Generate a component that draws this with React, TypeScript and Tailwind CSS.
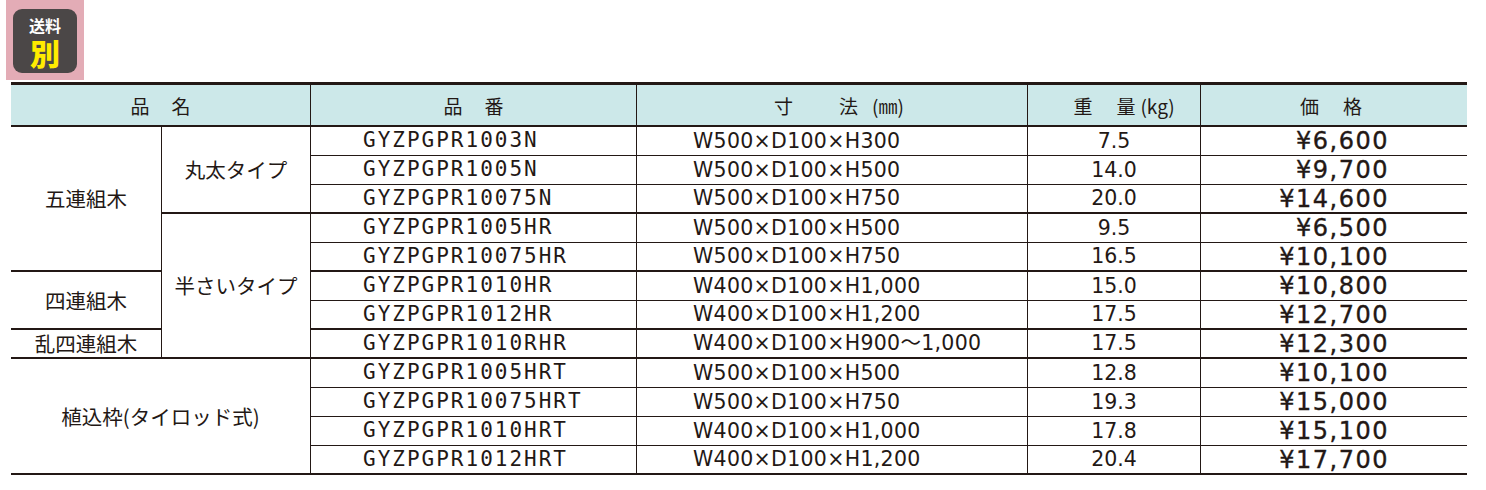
const items = [
  { pn: "GYZPGPR1003N", dim: "W500×D100×H300", wt: "7.5", price: "¥6,600" },
  { pn: "GYZPGPR1005N", dim: "W500×D100×H500", wt: "14.0", price: "¥9,700" },
  { pn: "GYZPGPR10075N", dim: "W500×D100×H750", wt: "20.0", price: "¥14,600", thick: true },
  { pn: "GYZPGPR1005HR", dim: "W500×D100×H500", wt: "9.5", price: "¥6,500" },
  { pn: "GYZPGPR10075HR", dim: "W500×D100×H750", wt: "16.5", price: "¥10,100", thick: true },
  { pn: "GYZPGPR1010HR", dim: "W400×D100×H1,000", wt: "15.0", price: "¥10,800" },
  { pn: "GYZPGPR1012HR", dim: "W400×D100×H1,200", wt: "17.5", price: "¥12,700", thick: true },
  { pn: "GYZPGPR1010RHR", dim: "W400×D100×H900〜1,000", wt: "17.5", price: "¥12,300", thick: true },
  { pn: "GYZPGPR1005HRT", dim: "W500×D100×H500", wt: "12.8", price: "¥10,100" },
  { pn: "GYZPGPR10075HRT", dim: "W500×D100×H750", wt: "19.3", price: "¥15,000" },
  { pn: "GYZPGPR1010HRT", dim: "W400×D100×H1,000", wt: "17.8", price: "¥15,100" },
  { pn: "GYZPGPR1012HRT", dim: "W400×D100×H1,200", wt: "20.4", price: "¥17,700", thick: true },
];

const cjk = "font-['Noto_Sans_CJK_JP',sans-serif]";
const num = "font-['DejaVu_Sans','Noto_Sans_CJK_JP',sans-serif]";

function Badge() {
  return (
    <div className="ml-[6px] h-[80px] w-[78px] bg-[#e3acb6] pl-[7px] pt-[9px]">
      <div className={`flex h-[64px] w-[64px] flex-col items-center rounded-[9px] bg-[#4b4747] ${cjk}`}>
        <span className="mt-[6px] text-[16px] font-bold leading-[20px] text-white">送料</span>
        <span className="text-[30px] font-black leading-[34px] text-[#ffec00]">別</span>
      </div>
    </div>
  );
}

function Group({ className, children }: { className: string; children: React.ReactNode }) {
  return (
    <div className={`flex items-center justify-center border-[#231815] text-[20.5px] text-[#231815] ${cjk} ${className}`}>
      {children}
    </div>
  );
}

function Row({ it }: { it: (typeof items)[number] }) {
  const b = it.thick ? "border-b-2" : "border-b";
  return (
    <>
      <div className={`flex items-center border-l ${b} border-[#231815] pl-[52px] font-['DejaVu_Sans_Mono',monospace] text-[21px] tracking-[2px]`}>
        {it.pn}
      </div>
      <div className={`flex items-center border-l ${b} border-[#231815] pl-[56px] text-[20.5px] tracking-[0.3px] ${num}`}>
        {it.dim}
      </div>
      <div className={`flex items-center justify-center border-l ${b} border-[#231815] text-[20.5px] ${num}`}>
        {it.wt}
      </div>
      <div className={`flex items-center justify-end border-l ${b} border-[#231815] pr-[78px] text-[24px] tracking-[1.5px] [-webkit-text-stroke:0.35px_#231815] ${num}`}>
        {it.price}
      </div>
    </>
  );
}

export default function App() {
  return (
    <div className="h-[490px] w-[1486px] bg-white text-[#231815]">
      <Badge />
      <div className="ml-[11px] mt-[2px] grid w-[1456px] grid-cols-[150px_149px_326px_391px_173px_267px] grid-rows-[42px_repeat(12,29px)] border-t-[3px] border-[#231815]">
        {/* header */}
        <div className={`col-span-2 flex items-center justify-center gap-[22px] border-b-2 border-[#231815] bg-[#cce8e9] pt-[3px] text-[19px] ${cjk}`}>
          <span>品</span>
          <span>名</span>
        </div>
        <div className={`flex items-center justify-center gap-[22px] border-b-2 border-l border-[#231815] bg-[#cce8e9] pt-[3px] text-[19px] ${cjk}`}>
          <span>品</span>
          <span>番</span>
        </div>
        <div className={`flex items-center justify-center border-b-2 border-l border-[#231815] bg-[#cce8e9] pl-[14px] pt-[3px] text-[19px] ${cjk}`}>
          <span>寸</span>
          <span className="ml-[46px]">法</span>
          <span className="ml-[14px]">(㎜)</span>
        </div>
        <div className={`flex items-center justify-center border-b-2 border-l border-[#231815] bg-[#cce8e9] pl-[20px] pt-[3px] text-[19px] ${cjk}`}>
          <span>重</span>
          <span className="ml-[24px]">量</span>
          <span className="ml-[5px]">(kg)</span>
        </div>
        <div className={`flex items-center justify-center gap-[24px] border-b-2 border-l border-[#231815] bg-[#cce8e9] pr-[6px] pt-[3px] text-[19px] ${cjk}`}>
          <span>価</span>
          <span>格</span>
        </div>

        {/* body */}
        <Group className="row-span-5 border-b-2">五連組木</Group>
        <Group className="row-span-3 border-b-2 border-l">丸太タイプ</Group>
        <Row it={items[0]} />
        <Row it={items[1]} />
        <Row it={items[2]} />
        <Group className="row-span-5 border-b-2 border-l">半さいタイプ</Group>
        <Row it={items[3]} />
        <Row it={items[4]} />
        <Group className="row-span-2 border-b-2">四連組木</Group>
        <Row it={items[5]} />
        <Row it={items[6]} />
        <Group className="border-b-2">乱四連組木</Group>
        <Row it={items[7]} />
        <Group className="col-span-2 row-span-4 border-b-2">植込枠(タイロッド式)</Group>
        <Row it={items[8]} />
        <Row it={items[9]} />
        <Row it={items[10]} />
        <Row it={items[11]} />
      </div>
    </div>
  );
}
